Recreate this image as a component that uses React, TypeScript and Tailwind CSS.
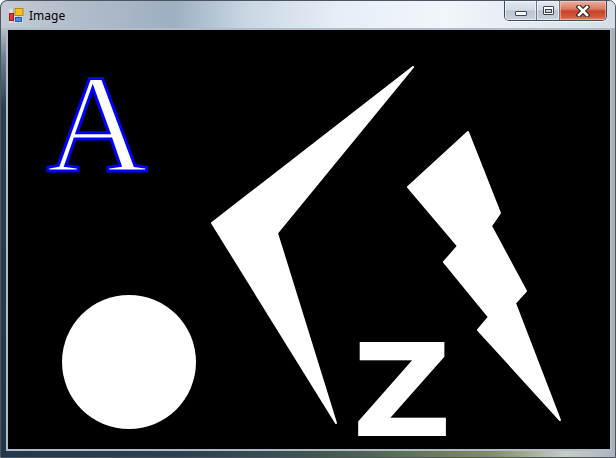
import React from 'react';

const BOLT = [
  [460, 102],
  [400, 157],
  [450, 216],
  [436, 232],
  [481, 287],
  [470, 300],
  [552, 390],
  [507, 273],
  [518, 261],
  [483, 196],
  [492, 183],
];

const CHEVRON = [
  [405, 37],
  [204, 193],
  [328, 393],
  [269, 203],
];

const pts = (list: number[][]) => list.map((p) => p.join(',')).join(' ');

function AppIcon() {
  return (
    <svg width="16" height="16" viewBox="0 0 16 16" className="shrink-0">
      <rect x="1" y="1" width="14" height="14" fill="#d8dde3" />
      <path d="M1 5.5H15M1 10.5H15M5.5 1V15M10.5 1V15" stroke="#aab2bb" strokeWidth="1" />
      <rect x="7" y="0.5" width="8" height="7" fill="#f3c21c" stroke="#b88a10" strokeWidth="1" />
      <rect x="1.5" y="5.5" width="4" height="7" fill="#e03a2a" stroke="#9a1f14" strokeWidth="1" />
      <rect x="7.5" y="9.5" width="6" height="4" fill="#4a8ee0" stroke="#2a5ea8" strokeWidth="1" />
    </svg>
  );
}

function CaptionButtons() {
  return (
    <div className="flex h-[20px] ml-auto mr-[8px] rounded-b-[5px] border border-t-0 border-[#3f4c5c] overflow-hidden shadow-[0_1px_0_rgba(255,255,255,0.6)]">
      <div className="w-[32px] flex items-center justify-center bg-[linear-gradient(180deg,#e4e9ef_0%,#d2dae3_45%,#b9c5d1_55%,#c9d3dd_100%)] border-r border-[#6a7888] shadow-[inset_0_0_0_1px_rgba(255,255,255,0.55)]">
        <div className="w-[12px] h-[5px] mt-[5px] bg-white border border-[#3a4350] rounded-[1px]" />
      </div>
      <div className="w-[23px] flex items-center justify-center bg-[linear-gradient(180deg,#e4e9ef_0%,#d2dae3_45%,#b9c5d1_55%,#c9d3dd_100%)] border-r border-[#6a7888] shadow-[inset_0_0_0_1px_rgba(255,255,255,0.55)]">
        <div className="w-[11px] h-[9px] border border-[#3a4350] bg-white flex items-center justify-center rounded-[1px]">
          <div className="w-[7px] h-[4px] mt-[1px] border border-[#3a4350] bg-[#c9d3dd]" />
        </div>
      </div>
      <div className="w-[46px] flex items-center justify-center bg-[linear-gradient(180deg,#eab1a2_0%,#dc7c64_40%,#c8432a_55%,#d45b3f_85%,#e48a6e_100%)] shadow-[inset_0_0_0_1px_rgba(255,220,210,0.45)]">
        <svg width="14" height="12" viewBox="0 0 14 12">
          <path d="M3 2L11 10M11 2L3 10" stroke="#3b2a26" strokeWidth="5" strokeLinecap="square" />
          <path d="M3 2L11 10M11 2L3 10" stroke="#ffffff" strokeWidth="2.6" strokeLinecap="square" />
        </svg>
      </div>
    </div>
  );
}

export default function App() {
  return (
    <div className="w-[616px] h-[458px] flex flex-col overflow-hidden rounded-t-[7px] border border-[#4c5660] bg-[linear-gradient(90deg,#25384b_0%,#2c4050_30%,#465a50_55%,#7f8e66_80%,#c4cec8_92%,#aab6ba_100%)]">
      <div className="h-[27px] shrink-0 flex items-start bg-[linear-gradient(90deg,#c3ccd6_0%,#b2bdca_12%,#9eafc1_28%,#c9d7e4_40%,#e6eef6_55%,#f1f6fa_72%,#e2e9f0_88%,#d5dde5_100%)]">
        <div className="flex items-center gap-[5px] pl-[7px] pt-[7px]">
          <AppIcon />
          <span className="text-[12px] leading-[14px] text-black font-['Noto_Sans',sans-serif]">Image</span>
        </div>
        <CaptionButtons />
      </div>
      <div className="flex-1 flex min-h-0">
        <div className="w-[5px] shrink-0 bg-[linear-gradient(180deg,#b7c2cc_0px,#6c7e90_30px,#2a3e52_80px,#22364a_100%)]" />
        <div className="flex-1 border-2 border-[#aebdc9] bg-black">
          <svg width="602" height="419" viewBox="0 0 602 419" className="block" overflow="visible">
            <text
              x="38.5"
              y="140.5"
              fontFamily="'Liberation Serif', serif"
              fontSize="140"
              fill="#ffffff"
              stroke="#0000ff"
              strokeWidth="3"
            >
              A
            </text>
            <circle cx="121" cy="332" r="67" fill="#ffffff" />
            <polygon points={pts(CHEVRON)} fill="#ffffff" stroke="#ffffff" strokeWidth="2" strokeLinejoin="round" />
            <text
              x="344"
              y="406"
              transform="translate(344 0) scale(1.07 1) translate(-344 0)"
              fontFamily="'DejaVu Sans', sans-serif"
              fontWeight="bold"
              fontSize="129"
              fill="#ffffff"
            >
              Z
            </text>
            <polygon points={pts(BOLT)} fill="#ffffff" stroke="#ffffff" strokeWidth="2" strokeLinejoin="round" />
          </svg>
        </div>
        <div className="w-[4px] shrink-0 bg-[#a7b3b8]" />
      </div>
      <div className="h-[6px] shrink-0" />
    </div>
  );
}
